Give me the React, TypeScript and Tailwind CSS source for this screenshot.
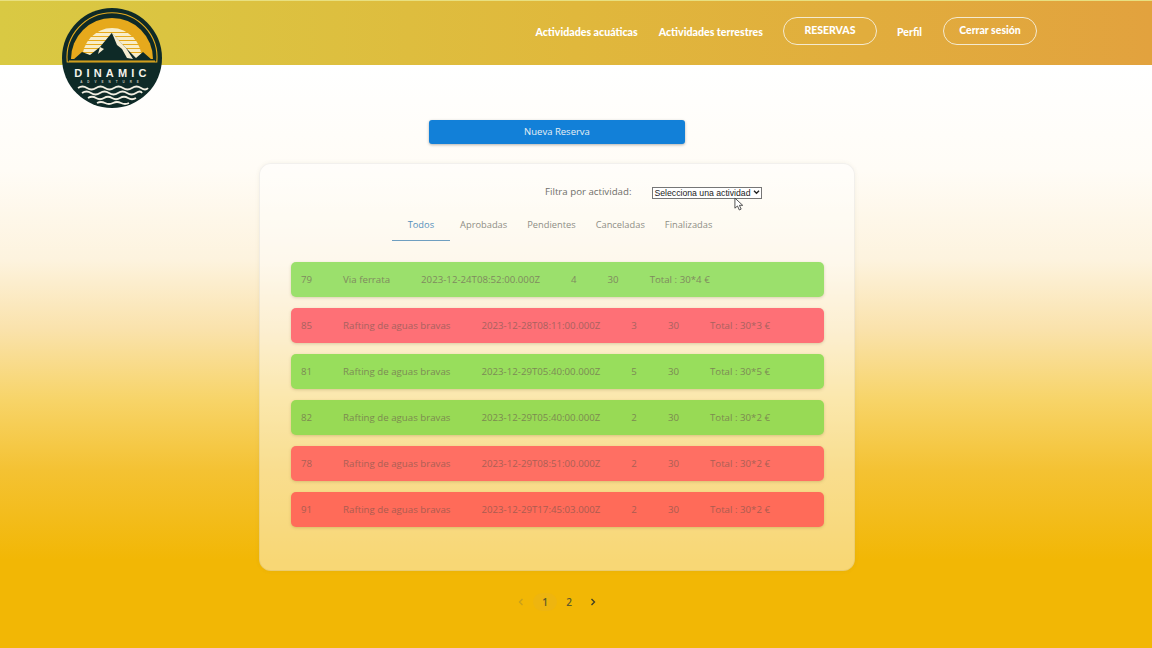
const navFont = "font-['Lato',sans-serif]";

const rows = [
  { id: 79, name: "Via ferrata", date: "2023-12-24T08:52:00.000Z", qty: 4, bg: "bg-[#9be06c]", text: "text-[#7f8a5f]" },
  { id: 85, name: "Rafting de aguas bravas", date: "2023-12-28T08:11:00.000Z", qty: 3, bg: "bg-[#fe7076]", text: "text-[#a8625f]" },
  { id: 81, name: "Rafting de aguas bravas", date: "2023-12-29T05:40:00.000Z", qty: 5, bg: "bg-[#98de5c]", text: "text-[#7c8a55]" },
  { id: 82, name: "Rafting de aguas bravas", date: "2023-12-29T05:40:00.000Z", qty: 2, bg: "bg-[#98da55]", text: "text-[#7c8a50]" },
  { id: 78, name: "Rafting de aguas bravas", date: "2023-12-29T08:51:00.000Z", qty: 2, bg: "bg-[#ff6f63]", text: "text-[#ab5f55]" },
  { id: 91, name: "Rafting de aguas bravas", date: "2023-12-29T17:45:03.000Z", qty: 2, bg: "bg-[#ff6b59]", text: "text-[#ab5c50]" },
];

const tabs = ["Aprobadas", "Pendientes", "Canceladas", "Finalizadas"];

function Logo() {
  return (
    <svg viewBox="0 0 100 100" className="absolute left-[62px] top-[8px] w-[100px] h-[100px]">
      <circle cx="50" cy="50" r="50" fill="#0e2a27" />
      <path d="M5.2 54 A45 45 0 1 1 94.8 54 Z" fill="none" stroke="#e5ab1e" strokeWidth="1.1" />
      <path d="M9 51 A41 41 0 1 1 91 51 Z" fill="#e6a91c" />
      <path d="M20 52 A30 32 0 0 1 80 52 Z" fill="#f8edc8" />
      {[24, 28, 32, 36, 40, 44].map((y) => (
        <rect key={y} x="20" y={y} width="60" height="1" fill="#e6a91c" />
      ))}
      <path d="M11 52 L20 44 L28 47 L38 39 L49.7 25 L64 40 L74 50 L81 44 L90 52 Z" fill="#0e2a27" />
      <path d="M50 25 L55 37 L60 41 L65 50 L71 51 L64 40 Z" fill="#f6ecd0" />
      <path d="M38 39 L36 46 L42 41 Z" fill="#f6ecd0" />
      <rect x="7" y="52.5" width="86" height="1.3" fill="#e5ab1e" />
      <text x="50.5" y="69" textAnchor="middle" fill="#f5f3ea" fontSize="11" fontWeight="700" letterSpacing="4.2" fontFamily="'Liberation Sans',sans-serif">DINAMIC</text>
      <text x="50" y="74.5" textAnchor="middle" fill="#c8c8bc" fontSize="3" fontWeight="700" letterSpacing="5" fontFamily="'Liberation Sans',sans-serif">ADVENTURE</text>
      <g fill="none" stroke="#f2efe2" strokeWidth="1.8">
        <path d="M16 80 q4.5 -3 9 0 t9 0 t9 0 t9 0 t9 0 t9 0 t9 0 t7 0" />
        <path d="M20 85 q4.5 -3 9 0 t9 0 t9 0 t9 0 t9 0 t9 0 t6 0" />
        <path d="M26 90 q4 -2.5 8 0 t8 0 t8 0 t8 0 t8 0 t8 0" />
        <path d="M35 95 q4 -2 8 0 t8 0 t8 0 t8 0" />
      </g>
    </svg>
  );
}

export default function App() {
  return (
    <div className="relative h-[648px] w-[1152px] overflow-hidden bg-[linear-gradient(180deg,#ffffff_65px,#fffcf6_170px,#fdf3de_260px,#fae2ab_330px,#f7d468_400px,#f4c233_470px,#f2b705_560px)] font-['Open_Sans',sans-serif]">
      <header className={`flex h-[65px] items-center justify-end pr-[115px] bg-[linear-gradient(90deg,#d9c943,#e0b83c_50%,#e2a23e)] border-t border-[#e8e080] text-white ${navFont}`}>
        <a className="text-[10.6px] font-black mr-[21px]">Actividades acuáticas</a>
        <a className="text-[10.6px] font-black mr-[20px]">Actividades terrestres</a>
        <button className="mr-[20px] h-[28px] w-[94px] rounded-full border border-[#f4ead0] text-[10.5px] font-black -mt-[4px]">
          RESERVAS
        </button>
        <a className="text-[10.5px] font-black mr-[21px]">Perfil</a>
        <button className="h-[28px] w-[94px] rounded-full border border-[#f4ead0] text-[10.5px] font-black -mt-[4px]">
          Cerrar sesión
        </button>
      </header>
      <Logo />

      <main className="flex flex-col items-center pt-[55px] pr-[38px]">
        <button className="h-[24px] w-[256px] rounded-[3px] bg-[#1280d8] text-[9.5px] font-medium text-[#e8f0f4] shadow-[0_1px_3px_rgba(0,0,0,0.3)]">
          Nueva Reserva
        </button>

        <section className="mt-[19px] h-[408px] w-[596px] rounded-[12px] border border-black/5 bg-white/45 shadow-[0_0_4px_rgba(120,100,50,0.08)]">
          <div className="flex items-center pl-[285px] pt-[21px] h-[36px]">
            <span className="text-[9.7px] text-[#6f6f6a]">Filtra por actividad:</span>
            <div className="relative ml-[21px] h-[12px] w-[110px]">
              <select className="block h-full w-full appearance-none border border-[#767676] bg-white p-0 pl-[1px] text-[8.7px] leading-[10px] text-[#222] font-['Liberation_Sans',sans-serif]">
                <option>Selecciona una actividad</option>
              </select>
              <svg viewBox="0 0 8 6" className="pointer-events-none absolute right-[2px] top-[3.5px] h-[5px] w-[7px]" fill="none" stroke="#222" strokeWidth="1.6">
                <path d="M1 1 L4 4 L7 1" />
              </svg>
            </div>
          </div>

          <nav className="mt-[8px] flex justify-center text-[9.3px] h-[33px]">
            <span className="border-b border-[#6f9fc0] px-4 pt-[10px] text-[#5590bb]">Todos</span>
            {tabs.map((t) => (
              <span key={t} className="px-[10px] pt-[10px] text-[#8e8e86]">
                {t}
              </span>
            ))}
          </nav>

          <div className="mt-[21px] flex flex-col gap-[11px] pl-[31px] pr-[30px]">
            {rows.map((r) => (
              <div
                key={r.id}
                className={`flex h-[35px] items-center gap-[31px] rounded-[5px] pl-[10px] pt-[1px] text-[9.7px] shadow-[0_1px_3px_rgba(120,100,40,0.25)] ${r.bg} ${r.text}`}
              >
                <span>{r.id}</span>
                <span>{r.name}</span>
                <span>{r.date}</span>
                <span>{r.qty}</span>
                <span>30</span>
                <span>
                  Total : 30*{r.qty} €
                </span>
              </div>
            ))}
          </div>
        </section>

        <div className="mt-[22px] flex items-center text-[10px] font-semibold text-[#5f5a2a]">
          <span className="flex w-[24px] justify-center text-[#c9a01a]">
            <svg viewBox="0 0 8 10" className="h-[8px] w-[6px]" fill="none" stroke="currentColor" strokeWidth="1.8"><path d="M6 1 L2 5 L6 9" /></svg>
          </span>
          <span className="flex h-[18px] w-[24px] items-center justify-center rounded-full bg-[#eeb50f]">1</span>
          <span className="flex w-[24px] justify-center">2</span>
          <span className="flex w-[24px] justify-center text-[#3f3f25]">
            <svg viewBox="0 0 8 10" className="h-[8px] w-[6px]" fill="none" stroke="currentColor" strokeWidth="1.8"><path d="M2 1 L6 5 L2 9" /></svg>
          </span>
        </div>
      </main>

      {/* mouse pointer caught in the capture */}
      <svg viewBox="0 0 12 16" className="absolute left-[734px] top-[197px] h-[15px] w-[11px]">
        <path d="M1 1 L1 12 L3.8 9.6 L5.8 14 L7.8 13 L5.9 8.9 L9.5 8.9 Z" fill="#fff" stroke="#333" strokeWidth="0.9" />
      </svg>
    </div>
  );
}
